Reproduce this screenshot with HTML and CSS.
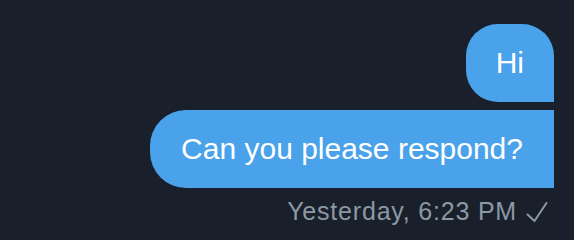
FILE: index.html
```html
<!DOCTYPE html>
<html lang="en">
<head>
<meta charset="utf-8">
<link rel="stylesheet" href="styles.css">
<title>Messages</title>
</head>
<body>
  <main class="thread">
    <div class="bubble bubble-first">Hi</div>
    <div class="bubble bubble-last">Can you please respond?</div>
    <div class="meta">
      <span class="time">Yesterday, 6:23 PM</span>
      <svg class="check" width="22" height="20" viewBox="0 0 22 20" aria-hidden="true">
        <polyline points="1.5,12.5 8.5,19 20.5,1" fill="none" stroke="#8b98a5" stroke-width="2" stroke-linecap="round" stroke-linejoin="round"/>
      </svg>
    </div>
  </main>
</body>
</html>
```

FILE: styles.css
```css
html, body {
  margin: 0;
  padding: 0;
  background: #1a202b;
  height: 100%;
}

.thread {
  display: flex;
  flex-direction: column;
  align-items: flex-end;
  gap: 8px;
  padding: 24px 20px 0 20px;
  font-family: "Liberation Sans", Arial, sans-serif;
}

.bubble {
  background: #4aa2ea;
  color: #ffffff;
  font-size: 30px;
  line-height: 36px;
  padding: 21px 31px;
  white-space: nowrap;
}

.bubble-first {
  padding: 21px 30px;
  border-radius: 32px 32px 0 32px;
}

.bubble-last {
  border-radius: 36px 0 0 36px;
}

.meta {
  display: flex;
  align-items: center;
  gap: 9px;
  margin-right: 6px;
  color: #8b98a5;
  font-size: 25px;
  line-height: 30px;
  letter-spacing: 0.8px;
}

.check {
  display: block;
  margin-top: 2px;
}
```
